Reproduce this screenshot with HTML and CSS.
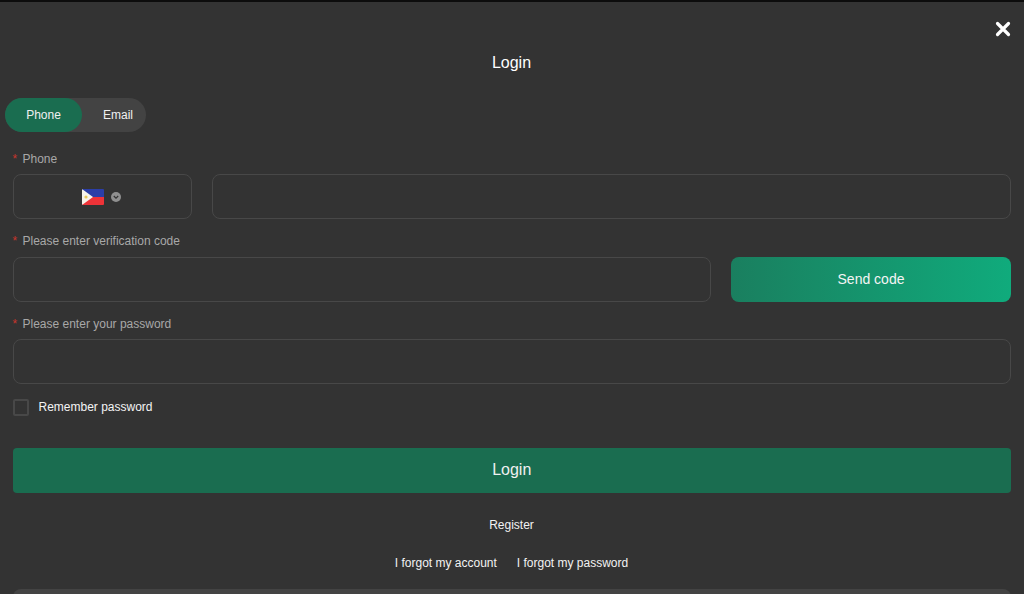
FILE: index.html
```html
<!DOCTYPE html>
<html lang="en">
<head>
<meta charset="utf-8">
<title>Login</title>
<link rel="stylesheet" href="styles.css">
</head>
<body>
<div class="modal">
  <button class="close" aria-label="Close">
    <svg width="16" height="16" viewBox="0 0 16 16"><path d="M2.5 2.5 13.5 13.5M13.5 2.5 2.5 13.5" stroke="#fff" stroke-width="3.2" stroke-linecap="round"/></svg>
  </button>
  <h1 class="title">Login</h1>
  <div class="tabs">
    <span class="tab active">Phone</span>
    <span class="tab">Email</span>
  </div>
  <form class="form">
    <div class="field">
      <label class="label"><i>*</i>Phone</label>
      <div class="row phone-row">
        <div class="box country">
          <svg class="flag" width="22" height="16" viewBox="0 0 22 16">
            <rect width="22" height="8" fill="#2b3ea8"/>
            <rect y="8" width="22" height="8" fill="#ee3338"/>
            <path d="M0 0 11 8 0 16Z" fill="#f6f3ea"/>
            <circle cx="4" cy="8" r="1.6" fill="#e8c85a"/>
          </svg>
          <svg class="caret" width="10" height="10" viewBox="0 0 10 10">
            <circle cx="5" cy="5" r="5" fill="#909090"/>
            <path d="M2.8 4 5 6.2 7.2 4" fill="none" stroke="#333" stroke-width="1.2"/>
          </svg>
        </div>
        <div class="box grow"></div>
      </div>
    </div>
    <div class="field code-field">
      <label class="label"><i>*</i>Please enter verification code</label>
      <div class="row">
        <div class="box grow"></div>
        <button type="button" class="send">Send code</button>
      </div>
    </div>
    <div class="field">
      <label class="label"><i>*</i>Please enter your password</label>
      <div class="box"></div>
    </div>
    <div class="remember">
      <span class="check"></span>
      <span>Remember password</span>
    </div>
    <button type="button" class="submit">Login</button>
  </form>
  <a class="link register">Register</a>
  <div class="forgot">
    <a class="link">I forgot my account</a>
    <a class="link">I forgot my password</a>
  </div>
  <div class="next"></div>
</div>
</body>
</html>
```
FILE: styles.css
```css
* { box-sizing: border-box; }
html, body { margin: 0; height: 100%; overflow: hidden; }
body {
  background: #333;
  color: #fff;
  font-family: "Liberation Sans", Arial, sans-serif;
}
.modal {
  position: relative;
  height: 594px;
  padding-right: 1px;
  border-top: 2px solid #0c0c0c;
  overflow: hidden;
}
.close {
  position: absolute;
  top: 19px;
  right: 13px;
  width: 16px;
  height: 16px;
  padding: 0;
  border: 0;
  background: none;
  display: block;
}
.close svg { display: block; }
.title {
  margin: 0;
  padding-top: 51px;
  height: 96px;
  font-size: 16px;
  font-weight: 400;
  line-height: 19px;
  text-align: center;
}
.tabs {
  display: flex;
  width: 141px;
  height: 34px;
  margin-left: 5px;
  border-radius: 17px;
  background: #434343;
  font-size: 12px;
}
.tab {
  display: flex;
  align-items: center;
  justify-content: center;
  width: 77px;
  height: 34px;
  border-radius: 17px;
  color: #f0f0f0;
}
.tab:last-child { width: 64px; padding-left: 8px; }
.tab.active { background: #1a6d50; }
.form { padding: 0 12px 0 12.5px; }
.field { margin-top: 18.4px; }
.field + .field { margin-top: 13px; }
.label {
  display: block;
  height: 16px;
  margin-bottom: 8px;
  font-size: 12px;
  line-height: 18px;
  color: #a8a8a8;
}
.code-field .label { margin-bottom: 8.5px; }
.label i {
  display: inline-block;
  width: 10px;
  font-style: normal;
  color: #c8352c;
}
.row { display: flex; gap: 20px; }
.box {
  height: 45px;
  border: 1px solid #484848;
  border-radius: 8px;
  background: #333;
}
.grow { flex: 1; }
.country {
  display: flex;
  align-items: center;
  justify-content: center;
  gap: 7px;
  width: 179px;
  padding-right: 2px;
}
.flag { display: block; border-radius: 1px; }
.caret { display: block; }
.send {
  width: 280px;
  height: 45px;
  border: 0;
  border-radius: 8px;
  background: linear-gradient(90deg, #1a7f5f 0%, #10ab7c 100%);
  color: #f4f4f4;
  font: 14px "Liberation Sans", Arial, sans-serif;
}
.remember {
  display: flex;
  align-items: flex-start;
  gap: 10px;
  height: 17px;
  margin-top: 15px;
  font-size: 12px;
  line-height: 17px;
  color: #f4f4f4;
}
.check {
  width: 16px;
  height: 17px;
  border: 2px solid #484848;
  border-radius: 2px;
}
.submit {
  display: block;
  width: 100%;
  height: 45px;
  margin-top: 32px;
  padding: 0 0 1px;
  border: 0;
  border-radius: 4px;
  background: #1a6d50;
  color: #f0f0f0;
  font: 16px "Liberation Sans", Arial, sans-serif;
}
.link { font-size: 12px; line-height: 14px; color: #f2f2f2; }
.register { display: block; margin-top: 25px; text-align: center; }
.forgot {
  display: flex;
  justify-content: center;
  gap: 20px;
  margin-top: 24px;
}
.next {
  height: 40px;
  margin: 19px 12px 0 13px;
  border-radius: 8px;
  background: #434343;
}
```
